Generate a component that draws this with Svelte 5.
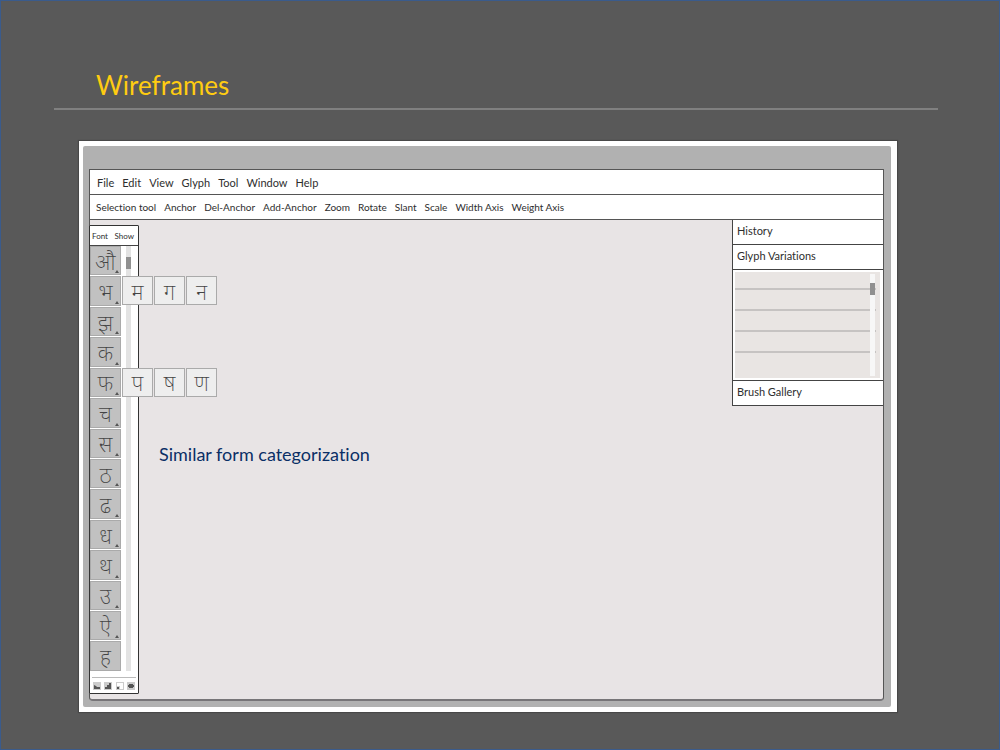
<script>
  const menus = ['File', 'Edit', 'View', 'Glyph', 'Tool', 'Window', 'Help'];
  const tools = ['Selection tool', 'Anchor', 'Del-Anchor', 'Add-Anchor', 'Zoom', 'Rotate', 'Slant', 'Scale', 'Width Axis', 'Weight Axis'];
  const glyphs = [
    { char: 'औ', more: true },
    { char: 'भ', more: true, similar: ['म', 'ग', 'न'] },
    { char: 'झ', more: true },
    { char: 'क', more: true },
    { char: 'फ', more: true, similar: ['प', 'ष', 'ण'] },
    { char: 'च', more: true },
    { char: 'स', more: true },
    { char: 'ठ', more: true },
    { char: 'ढ', more: true },
    { char: 'ध', more: true },
    { char: 'थ', more: true },
    { char: 'उ', more: true },
    { char: 'ऐ', more: true },
    { char: 'ह', more: false }
  ];
</script>

<main class="slide">
  <header><h1>Wireframes</h1></header>

  <section class="frame">
    <div class="bezel">
      <div class="app">
        <nav class="bar menubar">
          {#each menus as item}<button>{item}</button>{/each}
        </nav>
        <div class="bar toolbar">
          {#each tools as item}<button>{item}</button>{/each}
        </div>

        <div class="workspace">
          <aside class="palette">
            <div class="tabs"><button>Font</button><button>Show</button></div>
            <div class="list">
              <ul>
                {#each glyphs as g}
                  <li>
                    <button class="tile" class:more={g.more}>{g.char}</button>
                    {#if g.similar}
                      <div class="flyout">
                        {#each g.similar as s}<button>{s}</button>{/each}
                      </div>
                    {/if}
                  </li>
                {/each}
              </ul>
              <div class="track"><span class="thumb"></span></div>
            </div>
            <div class="sizes">
              <button aria-label="Small"><svg viewBox="0 0 8 8"><path d="M1 3 3 4 4 5H7V7H1Z" /></svg></button>
              <button aria-label="Large"><svg viewBox="0 0 8 8"><path d="M1 7V5H3V3H5V1H7V7Z" /></svg></button>
              <button aria-label="Corner"><svg viewBox="0 0 8 8"><path class="light" d="M1 1H7V7H4V4H1Z" /><path d="M1 5H3V7H1Z" /></svg></button>
              <button aria-label="Center"><svg viewBox="0 0 8 8"><path d="M2 2H6V3H7V5H6V6H2V5H1V3H2Z" /></svg></button>
            </div>
          </aside>

          <div class="canvas"><p>Similar form categorization</p></div>

          <aside class="panels">
            <button class="panel">History</button>
            <button class="panel">Glyph Variations</button>
            <div class="variations">
              <div class="rows"><i></i><i></i><i></i><i></i><i></i></div>
              <div class="track"><span class="thumb"></span></div>
            </div>
            <button class="panel">Brush Gallery</button>
          </aside>
        </div>
      </div>
    </div>
  </section>
</main>

<style>
  :global(body) { background: #595959; }
  * { box-sizing: border-box; }
  .slide {
    min-height: 100vh;
    display: flex;
    flex-direction: column;
    border: 1px solid #3a5b8c;
    background: #595959;
    font-family: "Gill Sans", "Gill Sans MT", Lato, sans-serif;
    font-variant-ligatures: none;
    color: #2e2e2e;
  }
  button {
    font: inherit;
    font-variant-ligatures: none;
    color: inherit;
    background: none;
    border: 0;
    padding: 0;
    margin: 0;
    white-space: nowrap;
    cursor: pointer;
  }
  header {
    margin: 0 61px 0 53px;
    padding: 68px 42px 7px;
    border-bottom: 2px solid #808080;
  }
  h1 {
    margin: 0;
    font-size: 26px;
    line-height: 32px;
    font-weight: 400;
    color: #fc1;
  }
  .frame {
    flex: 1;
    display: flex;
    margin: 31px 102px 37px 78px;
    padding: 5px 6px 5px 4px;
    background: #fff;
    box-shadow: 0 0 1px 1px #484848;
  }
  .bezel {
    flex: 1;
    display: flex;
    padding: 23px 7px 6px 6px;
    background: #b1b1b1;
    border-radius: 2px;
  }
  .app {
    flex: 1;
    min-width: 0;
    display: flex;
    flex-direction: column;
    border: 1px solid #555;
    border-bottom: 2px solid #777578;
    border-radius: 1px 1px 4px 4px;
    background: #e8e4e5;
  }
  .bar {
    display: flex;
    align-items: center;
    height: 25px;
    background: #fff;
    border-bottom: 1px solid #555;
  }
  .menubar { gap: 8px; padding-left: 7px; font-size: 11px; }
  .toolbar { gap: 8px; padding-left: 6px; font-size: 10px; }
  .workspace { flex: 1; display: flex; }

  .palette {
    width: 50px;
    margin: 5px 0 5px -1px;
    display: flex;
    flex-direction: column;
    border: 1px solid #333;
    border-radius: 1px;
    background: #fff;
  }
  .tabs {
    display: flex;
    justify-content: space-between;
    align-items: center;
    height: 20px;
    padding: 0 4px 0 2px;
    border-bottom: 1px solid #444;
    font-size: 8px;
  }
  .list { flex: 1; display: flex; padding-bottom: 6px; }
  ul {
    width: 31px;
    margin: 0;
    padding: 0;
    list-style: none;
    display: flex;
    flex-direction: column;
    gap: 1px;
  }
  li { flex: 1; display: flex; position: relative; }
  .tile {
    width: 31px;
    position: relative;
    border: 1px solid #aaa;
    background: #c1c1c1;
  }
  .tile, .flyout button {
    font-family: "Noto Sans", "Noto Sans Devanagari", sans-serif;
    font-size: 22px;
    line-height: 24px;
    font-weight: 200;
    color: #444;
  }
  .more::after {
    content: "";
    position: absolute;
    right: 1px;
    bottom: 1px;
    border: 2px solid transparent;
    border-top: 0;
    border-bottom: 3px solid #555;
  }
  .flyout {
    position: absolute;
    z-index: 2;
    left: 32px;
    top: 0;
    display: flex;
    gap: 1px;
  }
  .flyout button {
    width: 31px;
    height: 29px;
    border: 1px solid #aaa;
    background: #eee;
  }
  .track { width: 5px; margin-left: 5px; background: #e3e3e3; }
  .thumb {
    display: block;
    height: 12px;
    margin-top: 11px;
    background: #909090;
  }
  .sizes {
    display: flex;
    justify-content: space-between;
    margin: 0 2px;
    padding: 4px 1px;
    height: 16px;
    border-top: 1px solid #bbb;
  }
  .sizes button { display: flex; width: 8px; height: 8px; background: #ccc; }
  .sizes svg { width: 8px; height: 8px; fill: #555; }
  .sizes .light { fill: #fff; }

  .canvas { flex: 1; min-width: 0; padding: 221px 20px 20px; }
  p { margin: 0; font-size: 18px; line-height: 26px; color: #0b2f66; }

  .panels {
    width: 151px;
    display: flex;
    flex-direction: column;
    align-self: flex-start;
    border: 1px solid #444;
    border-top: 0;
    border-right: 0;
    background: #fff;
  }
  .panel {
    height: 25px;
    padding: 0 4px 3px;
    text-align: left;
    font-size: 11px;
    border-bottom: 1px solid #444;
  }
  .panel:last-child { height: 24px; border-bottom: 0; }
  .variations {
    display: flex;
    height: 111px;
    padding: 2px 3px 2px 2px;
    border-bottom: 1px solid #444;
    position: relative;
  }
  .rows { flex: 1; display: flex; flex-direction: column; background: #e9e5e3; padding-right: 4px; }
  .rows i { flex: 1; border-bottom: 2px solid #c6c3c2; }
  .rows i:first-child { flex: 0 0 18px; }
  .rows i:last-child { flex: 0 0 25px; border-bottom: 0; }
  .variations .track {
    position: absolute;
    right: 8px;
    top: 4px;
    bottom: 4px;
    margin: 0;
    background: #f7f7f7;
  }
  .variations .thumb { margin-top: 9px; }
</style>
